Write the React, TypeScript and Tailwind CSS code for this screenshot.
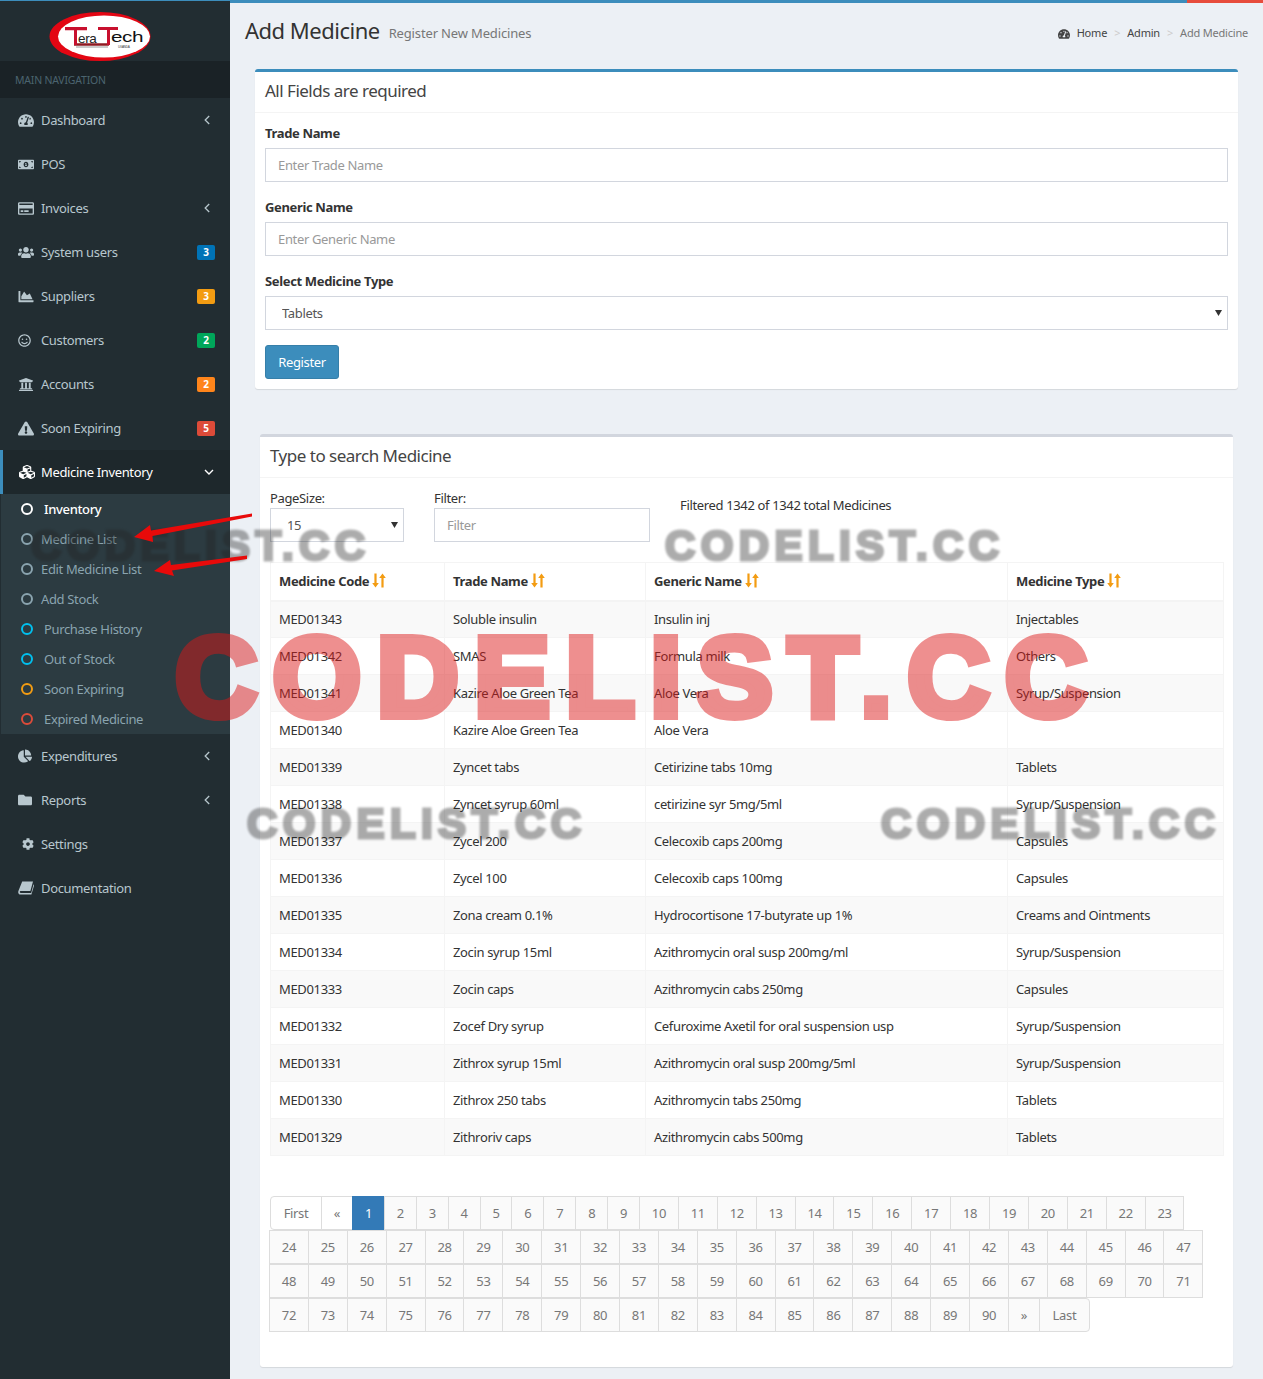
import React from "react";
import {
  FaTachometerAlt, FaMoneyBillAlt, FaRegCreditCard, FaUsers, FaChartArea, FaRegSmile, FaUniversity,
  FaExclamationTriangle, FaCubes, FaChartPie, FaFolder, FaCog,
} from "react-icons/fa";

type NavItem = { label: string; icon: React.ReactNode; chevron?: boolean; badge?: string; badgeClass?: string };

const iconClass = "text-[15px] w-[16px]";

function BookIcon() {
  return (
    <svg width="16" height="14" viewBox="0 0 16 14" fill="#b8c7ce">
      <path d="M4.2 0.5H15l-2.6 9.6H3c-.9 0-1.3.5-1.2 1.1.1.5.5.8 1.1.8h10.3l2.3-8.6.5.4v1L13.4 13.5H2.6C1.3 13.5.3 12.6.2 11.2c0-.5.1-.9.3-1.5z" />
    </svg>
  );
}

const topNav: NavItem[] = [
  { label: "Dashboard", icon: <FaTachometerAlt className={iconClass} />, chevron: true },
  { label: "POS", icon: <FaMoneyBillAlt className={iconClass} /> },
  { label: "Invoices", icon: <FaRegCreditCard className={iconClass} />, chevron: true },
  { label: "System users", icon: <FaUsers className={iconClass} />, badge: "3", badgeClass: "bg-[#0073b7]" },
  { label: "Suppliers", icon: <FaChartArea className={iconClass} />, badge: "3", badgeClass: "bg-[#f39c12]" },
  { label: "Customers", icon: <FaRegSmile className="text-[13px] w-[13px] mr-[3px]" />, badge: "2", badgeClass: "bg-[#00a65a]" },
  { label: "Accounts", icon: <FaUniversity className={iconClass} />, badge: "2", badgeClass: "bg-[#ff851b]" },
  { label: "Soon Expiring", icon: <FaExclamationTriangle className={iconClass} />, badge: "5", badgeClass: "bg-[#dd4b39]" },
];

const bottomNav: NavItem[] = [
  { label: "Expenditures", icon: <FaChartPie className="text-[14px] w-[14px] mr-[2px]" />, chevron: true },
  { label: "Reports", icon: <FaFolder className="text-[14px] w-[14px] mr-[2px]" />, chevron: true },
  { label: "Settings", icon: <FaCog className="text-[12px] w-[12px] ml-[4px]" /> },
  { label: "Documentation", icon: <BookIcon /> },
];

const subNav = [
  { label: "Inventory", ring: "border-white", text: "text-white font-medium pl-[11px]" },
  { label: "Medicine List", ring: "border-[#8aa4af]", text: "text-[#8aa4af] pl-[8px]" },
  { label: "Edit Medicine List", ring: "border-[#8aa4af]", text: "text-[#8aa4af] pl-[8px]" },
  { label: "Add Stock", ring: "border-[#8aa4af]", text: "text-[#8aa4af] pl-[8px]" },
  { label: "Purchase History", ring: "border-[#00c0ef]", text: "text-[#8aa4af] pl-[11px]" },
  { label: "Out of Stock", ring: "border-[#00c0ef]", text: "text-[#8aa4af] pl-[11px]" },
  { label: "Soon Expiring", ring: "border-[#f39c12]", text: "text-[#8aa4af] pl-[11px]" },
  { label: "Expired Medicine", ring: "border-[#dd4b39]", text: "text-[#8aa4af] pl-[11px]" },
];

const rows = [
  ["MED01343", "Soluble insulin", "Insulin inj", "Injectables"],
  ["MED01342", "SMAS", "Formula milk", "Others"],
  ["MED01341", "Kazire Aloe Green Tea", "Aloe Vera", "Syrup/Suspension"],
  ["MED01340", "Kazire Aloe Green Tea", "Aloe Vera", ""],
  ["MED01339", "Zyncet tabs", "Cetirizine tabs 10mg", "Tablets"],
  ["MED01338", "Zyncet syrup 60ml", "cetirizine syr 5mg/5ml", "Syrup/Suspension"],
  ["MED01337", "Zycel 200", "Celecoxib caps 200mg", "Capsules"],
  ["MED01336", "Zycel 100", "Celecoxib caps 100mg", "Capsules"],
  ["MED01335", "Zona cream 0.1%", "Hydrocortisone 17-butyrate up 1%", "Creams and Ointments"],
  ["MED01334", "Zocin syrup 15ml", "Azithromycin oral susp 200mg/ml", "Syrup/Suspension"],
  ["MED01333", "Zocin caps", "Azithromycin cabs 250mg", "Capsules"],
  ["MED01332", "Zocef Dry syrup", "Cefuroxime Axetil for oral suspension usp", "Syrup/Suspension"],
  ["MED01331", "Zithrox syrup 15ml", "Azithromycin oral susp 200mg/5ml", "Syrup/Suspension"],
  ["MED01330", "Zithrox 250 tabs", "Azithromycin tabs 250mg", "Tablets"],
  ["MED01329", "Zithroriv caps", "Azithromycin cabs 500mg", "Tablets"],
];

const pages = Array.from({ length: 90 }, (_, i) => i + 1);

function NavRow({ item }: { item: NavItem }) {
  return (
    <div className="h-[44px] flex items-center pl-[18px] pr-[15px] text-[#b8c7ce]">
      {item.icon}
      <span className="ml-[7px] mt-[2px] flex-1">{item.label}</span>
      {item.chevron && (
        <svg width="6" height="10" viewBox="0 0 6 10" className="mr-[5px]" fill="none" stroke="#b8c7ce" strokeWidth="1.3">
          <path d="M5.2 1L1.2 5l4 4" />
        </svg>
      )}
      {item.badge && (
        <span className={`${item.badgeClass} w-[18px] h-[15px] rounded-[2px] text-white text-[10px] font-bold leading-[14px] text-center tracking-normal`}>
          {item.badge}
        </span>
      )}
    </div>
  );
}

function SortIcon() {
  return (
    <svg width="14" height="15" viewBox="0 0 14 15" className="inline-block ml-[3px] -mt-[3px] align-middle" fill="#f39c12">
      <path d="M2.4 0.5h2.2v9.5h2.2l-3.3 4.5L0.2 10h2.2z" />
      <path d="M9.4 14.5h2.2V5h2.2L10.5 0.5 7.2 5h2.2z" />
    </svg>
  );
}

function SelectBox({ value, arrowClass }: { value: string; arrowClass: string }) {
  return (
    <div className="relative">
      <select className="block w-full h-[34px] border border-[#d2d6de] pl-[16px] pr-[12px] pt-[2px] bg-white text-[#555] rounded-none outline-none appearance-none">
        <option>{value}</option>
      </select>
      <svg width="7" height="6" viewBox="0 0 7 6" className={`absolute top-[14px] pointer-events-none ${arrowClass}`} fill="#333">
        <path d="M0 0h7L3.5 6z" />
      </svg>
    </div>
  );
}

function Field({ label, placeholder }: { label: string; placeholder: string }) {
  return (
    <div className="mb-[15px]">
      <label className="block font-bold text-[#333] h-[20px] leading-[20px] mb-[5px]">{label}</label>
      <input
        placeholder={placeholder}
        className="block w-full h-[34px] border border-[#d2d6de] px-[12px] bg-white placeholder:text-[#999] outline-none"
      />
    </div>
  );
}

function Logo() {
  return (
    <svg width="104" height="52" viewBox="0 0 104 52" className="ml-[49px]">
      <ellipse cx="51" cy="25.5" rx="50.5" ry="24.5" fill="#e30613" />
      <ellipse cx="55" cy="25.5" rx="46" ry="21" fill="#ffffff" />
      <path d="M25 33.5h35" stroke="#8f1a22" strokeWidth="2.4" fill="none" />
      <path d="M27 36h32" stroke="#9a9a9a" strokeWidth="1" fill="none" />
      <path d="M16 16h22v3.2H28V34h-3V19.2h-9zM49 16h20v3h-8v15h-3V19h-9z" fill="#c8102e" />
      <text x="29" y="31.5" fontFamily="Liberation Sans" fontSize="13.5" fill="#222">era</text>
      <text x="62" y="31" fontFamily="Liberation Sans" fontSize="15.5" textLength="32" lengthAdjust="spacingAndGlyphs" fill="#111">ech</text>
      <text x="69" y="36.5" fontFamily="Liberation Sans" fontSize="3.2" fill="#444">UGANDA</text>
    </svg>
  );
}

function Watermark({ className }: { className: string }) {
  return <div className={`absolute pointer-events-none whitespace-nowrap leading-none font-bold font-['Liberation_Sans',sans-serif] ${className}`}>CODELIST.CC</div>;
}

const grayMark = "text-[42px] tracking-[5.4px] text-[#222] opacity-[.37] blur-[1.2px] [-webkit-text-stroke:3.2px_#222]";

export default function App() {
  return (
    <div className="relative flex min-h-[1379px] w-[1263px] overflow-hidden bg-[#ecf0f5] font-['Noto_Sans',sans-serif] text-[13px] tracking-[-0.35px] text-[#333]">
      <aside className="w-[230px] shrink-0 bg-[#222d32] border-t border-[#3c8dbc]">
        <div className="h-[60px] pt-[10px]">
          <Logo />
        </div>
        <div className="h-[37px] bg-[#1a2226] text-[#4b646f] text-[10.5px] tracking-[-0.2px] leading-[38px] pl-[15px]">MAIN NAVIGATION</div>
        {topNav.map((n) => (
          <NavRow key={n.label} item={n} />
        ))}
        <div className="h-[44px] flex items-center pl-[15px] pr-[15px] bg-[#1e282c] border-l-[3px] border-[#3c8dbc] text-white">
          <FaCubes className="text-[16px] w-[18px]" />
          <span className="ml-[5px] mt-[2px] flex-1">Medicine Inventory</span>
          <svg width="10" height="6" viewBox="0 0 10 6" className="mr-[1px]" fill="none" stroke="#fff" strokeWidth="1.4">
            <path d="M1 1l4 4 4-4" />
          </svg>
        </div>
        <div className="ml-px bg-[#2c3b41] h-[240px]">
          {subNav.map((s) => (
            <div key={s.label} className="h-[30px] flex items-center pl-[20px]">
              <span className={`w-[12px] h-[12px] rounded-full border-2 ${s.ring}`} />
              <span className={`mt-[2px] ${s.text}`}>{s.label}</span>
            </div>
          ))}
        </div>
        {bottomNav.map((n) => (
          <NavRow key={n.label} item={n} />
        ))}
      </aside>

      <main className="flex-1 min-w-0">
        <div className="flex h-[3px]">
          <div className="flex-1 bg-[#3c8dbc]" />
          <div className="w-[76px] bg-[#e74c3c]" />
        </div>
        <div className="flex items-center h-[56px] pl-[15px] pr-[15px]">
          <h1 className="text-[22px] text-[#333] tracking-[-0.5px] -mt-[2px]">Add Medicine</h1>
          <span className="ml-[9px] mt-[5px] text-[#777] text-[13px] tracking-[-0.15px]">Register New Medicines</span>
          <div className="ml-auto flex items-center text-[11px] tracking-[-0.2px] mt-[5px] text-[#444]">
            <FaTachometerAlt className="text-[12px] mr-[7px]" />
            <span>Home</span>
            <span className="text-[#ccc] px-[7px]">&gt;</span>
            <span>Admin</span>
            <span className="text-[#ccc] px-[7px]">&gt;</span>
            <span className="text-[#777]">Add Medicine</span>
          </div>
        </div>

        <section className="mt-[10px] ml-[25px] mr-[25px] h-[320px] bg-white border-t-[3px] border-[#3c8dbc] rounded-[3px] shadow-[0_1px_1px_rgba(0,0,0,0.1)]">
          <div className="h-[41px] border-b border-[#f4f4f4] px-[10px] text-[17px] leading-[38px] text-[#444] tracking-[-0.5px]">All Fields are required</div>
          <div className="p-[10px]">
            <Field label="Trade Name" placeholder="Enter Trade Name" />
            <Field label="Generic Name" placeholder="Enter Generic Name" />
            <div className="mb-[15px]">
              <label className="block font-bold h-[20px] leading-[20px] mb-[5px]">Select Medicine Type</label>
              <SelectBox value="Tablets" arrowClass="right-[6px]" />
            </div>
            <button className="w-[74px] h-[34px] pt-[2px] bg-[#3c8dbc] border border-[#367fa9] rounded-[3px] text-white">Register</button>
          </div>
        </section>

        <section className="mt-[45px] ml-[30px] mr-[30px] h-[933px] bg-white border-t-[3px] border-[#d2d6de] rounded-[3px] shadow-[0_1px_1px_rgba(0,0,0,0.1)]">
          <div className="h-[41px] border-b border-[#f4f4f4] px-[10px] text-[17px] leading-[38px] text-[#444] tracking-[-0.5px]">Type to search Medicine</div>
          <div className="px-[10px] pt-[10px]">
            <div className="flex h-[74px]">
              <div className="w-[134px]">
                <div className="h-[20px] leading-[20px]">PageSize:</div>
                <SelectBox value="15" arrowClass="right-[6px]" />
              </div>
              <div className="w-[216px] ml-[30px]">
                <div className="h-[20px] leading-[20px]">Filter:</div>
                <input placeholder="Filter" className="block w-full h-[34px] border border-[#d2d6de] px-[12px] placeholder:text-[#999] outline-none" />
              </div>
              <div className="ml-[30px] mt-[7px] leading-[20px]">Filtered 1342 of 1342 total Medicines</div>
            </div>
            <table className="w-[953px] table-fixed border-collapse">
              <colgroup>
                <col className="w-[174px]" />
                <col className="w-[201px]" />
                <col className="w-[362px]" />
                <col className="w-[216px]" />
              </colgroup>
              <thead>
                <tr className="h-[38px] border-b-2 border-[#f4f4f4]">
                  {["Medicine Code", "Trade Name", "Generic Name", "Medicine Type"].map((h) => (
                    <th key={h} className="border border-[#f4f4f4] border-b-2 px-[8px] text-left font-bold">
                      {h}
                      <SortIcon />
                    </th>
                  ))}
                </tr>
              </thead>
              <tbody>
                {rows.map((r, i) => (
                  <tr key={r[0]} className={`h-[37px] ${i % 2 === 0 ? "bg-[#f9f9f9]" : "bg-white"}`}>
                    {r.map((c, j) => (
                      <td key={j} className={`border border-[#f4f4f4] px-[8px] ${i === 0 ? "pt-0" : "pt-[2px]"}`}>
                        {c}
                      </td>
                    ))}
                  </tr>
                ))}
              </tbody>
            </table>
            <div className="flex flex-wrap w-[953px] mt-[40px] text-[#777] leading-[32px]">
              <a className="w-[52px] h-[34px] flex justify-center bg-white border border-[#ddd] rounded-l-[4px]">First</a>
              <a className="w-[32px] h-[34px] -ml-px flex justify-center bg-white border border-[#ddd]">«</a>
              {pages.map((p) => (
                <a
                  key={p}
                  className={`${p < 10 ? "w-[32.9px]" : "w-[39.9px]"} h-[34px] -ml-px flex justify-center border ${
                    p === 1 ? "bg-[#337ab7] border-[#337ab7] text-white" : "bg-[#fafafa] border-[#ddd]"
                  }`}
                >
                  {p}
                </a>
              ))}
              <a className="w-[32px] h-[34px] -ml-px flex justify-center bg-[#fafafa] border border-[#ddd]">»</a>
              <a className="w-[51px] h-[34px] -ml-px flex justify-center bg-[#fafafa] border border-[#ddd] rounded-r-[4px]">Last</a>
            </div>
          </div>
        </section>
      </main>

      <Watermark className={`left-[31px] top-[525px] ${grayMark}`} />
      <Watermark className={`left-[665px] top-[525px] ${grayMark}`} />
      <Watermark className={`left-[247px] top-[803px] ${grayMark}`} />
      <Watermark className={`left-[881px] top-[803px] ${grayMark}`} />
      <Watermark className="left-[175px] top-[620px] text-[114px] tracking-[15.2px] text-[#dd1717] opacity-[.48] [-webkit-text-stroke:8px_#dd1717]" />

      <svg width="125" height="70" viewBox="130 510 125 70" className="absolute left-[130px] top-[510px] pointer-events-none">
        <path d="M134 537L150 525L151 530.5L252 513.5L252 516.5L152.5 536L153 542Z" fill="#e80a0a" />
        <path d="M154 571L170 560L171 565L247 555.5L247 559L172 570.5L174 576Z" fill="#e80a0a" />
      </svg>
    </div>
  );
}
